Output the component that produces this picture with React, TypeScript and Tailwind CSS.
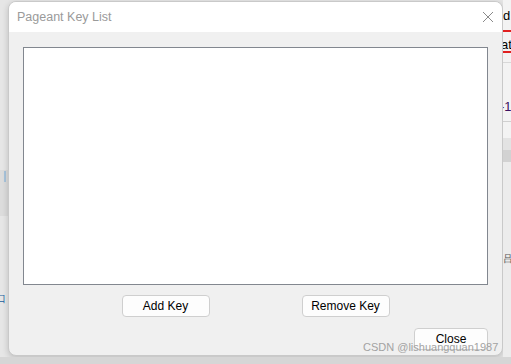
import React from "react";

export default function App() {
  const font = { fontFamily: '"Liberation Sans", Arial, sans-serif' };
  const btn =
    "h-[22px] rounded-[4px] border border-[#cfcfcf] bg-[#fdfdfd] text-[12px] text-black leading-none";
  return (
    <div
      className="relative w-[511px] h-[364px] overflow-hidden bg-[#e6e6e6] flex flex-col"
      style={font}
    >
      <div className="flex h-[357px] shrink-0">
        {/* left desktop strip */}
        <div className="w-[8px] shrink-0 flex flex-col overflow-hidden">
          <div className="h-[170px] shrink-0" />
          <div className="h-[46px] shrink-0 bg-[#dcdcdc] pl-[4px] pt-[1px]">
            <div className="w-[2px] h-[11px] bg-[#a8c4dc]" />
          </div>
          <div className="h-[78px] shrink-0" />
          <div className="text-[10px] leading-none text-[#2060a0] -ml-[4px] whitespace-nowrap">口</div>
        </div>

        {/* window */}
        <div className="mt-[1px] w-[495px] h-[355px] shrink-0 rounded-[8px] border border-[#c9c9c9] bg-[#f0f0f0] overflow-hidden shadow-[0_2px_6px_rgba(0,0,0,0.18)] flex flex-col">
          <div className="h-[30px] bg-white flex items-center justify-between px-[8px] shrink-0">
            <span className="text-[12.5px] text-[#9a9a9a] leading-none">Pageant Key List</span>
            <svg width="12" height="12" viewBox="0 0 12 12">
              <path d="M1 1 L11 11 M11 1 L1 11" stroke="#8a8a8a" strokeWidth="1" />
            </svg>
          </div>
          <div className="flex flex-col px-[14px] pt-[15px]">
            <div className="h-[238px] w-[465px] bg-white border border-[#82878f]" />
            <div className="flex justify-center gap-[92px] mt-[10px]">
              <button className={`w-[88px] ${btn}`}>Add Key</button>
              <button className={`w-[88px] ${btn}`}>Remove Key</button>
            </div>
            <div className="flex justify-end mt-[11px]">
              <button className={`w-[74px] ${btn}`}>Close</button>
            </div>
          </div>
        </div>

        {/* right desktop strip */}
        <div className="w-[8px] shrink-0 flex flex-col overflow-hidden bg-[#f3f3f3]">
          <div className="h-[30px] shrink-0 pt-[9px] text-[13px] leading-none text-black whitespace-nowrap">d</div>
          <div className="h-[2px] shrink-0 bg-[#e02020]" />
          <div className="h-[19px] shrink-0 pt-[6px] text-[13px] leading-none text-black whitespace-nowrap -ml-[2px]">at</div>
          <div className="h-[2px] shrink-0 bg-[#e02020]" />
          <div className="h-[9px] shrink-0" />
          <div className="h-px shrink-0 bg-[#d8d8d8]" />
          <div className="h-[58px] shrink-0 pt-[37px] text-[13px] leading-none text-[#3a1060] whitespace-nowrap -ml-[3px]">-1</div>
          <div className="h-px shrink-0 bg-[#d0d0d0]" />
          <div className="h-[16px] shrink-0" />
          <div className="h-[12px] shrink-0 bg-[#e3e3e3]" />
          <div className="h-[12px] shrink-0 bg-[#d2d2d2]" />
          <div className="flex-1 bg-[#ececec] pt-[92px] text-[10px] leading-none text-[#555] whitespace-nowrap">吕</div>
        </div>
      </div>

      {/* bottom desktop strip */}
      <div className="flex-1 bg-[#d6d6d6]" />

      {/* watermark overlay */}
      <div className="absolute left-[363px] top-[342px] text-[11px] leading-none text-[#9a9a9a] opacity-90 whitespace-nowrap">
        CSDN @lishuangquan1987
      </div>
    </div>
  );
}
